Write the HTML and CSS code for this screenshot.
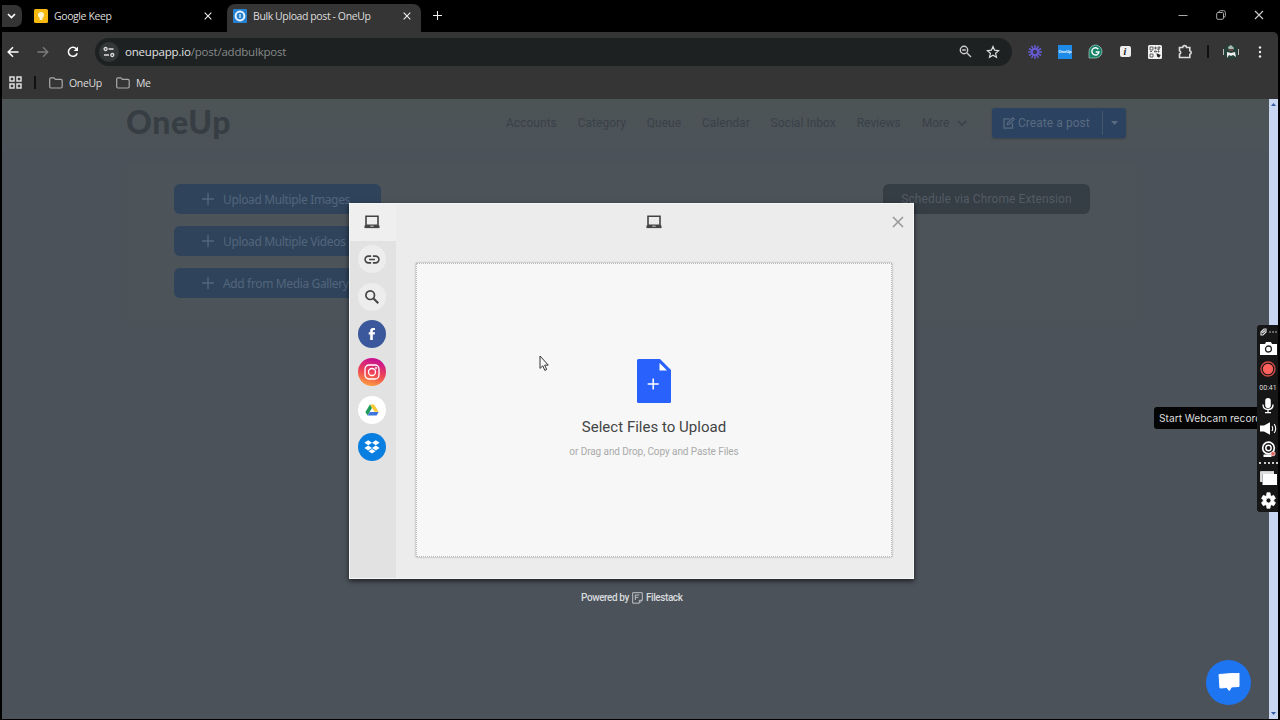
FILE: index.html
```html
<!DOCTYPE html>
<html lang="en">

<head>
    <meta charset="UTF-8">
    <meta name="viewport" content="width=device-width, initial-scale=1.0">
    <title>Bulk Upload post - OneUp</title>
    <link rel="stylesheet" href="styles.css">
</head>

<body>
    <svg class="sprite" width="0" height="0">
        <symbol id="laptop" viewBox="0 0 16 14">
            <path d="M2 1.2h12v9H2z" fill="none" stroke="currentColor" stroke-width="1.6" />
            <path d="M.5 10.5h15v2.6H.5z" fill="currentColor" />
            <path d="M6.3 11.2h3.4" stroke="#eee" stroke-width=".8" />
        </symbol>
        <symbol id="close" viewBox="0 0 12 12">
            <path d="M1 1l10 10M11 1L1 11" fill="none" stroke="currentColor" stroke-width="1.6" />
        </symbol>
        <symbol id="folder" viewBox="0 0 14 12">
            <path d="M.7 9.8V2q0-1.2 1.2-1.2h3l1.5 1.5h5.5q1.3 0 1.3 1.2v6.3q0 1.2-1.3 1.2h-10Q.7 11 .7 9.8z" fill="none" stroke="currentColor" stroke-width="1.2" />
        </symbol>
        <symbol id="plus" viewBox="0 0 12 12">
            <path d="M6 0v12M0 6h12" fill="none" stroke="currentColor" stroke-width="1.4" />
        </symbol>
    </svg>

    <div class="window">
        <div class="tabs">
            <button class="tabs__search"><svg width="9" height="6" viewBox="0 0 9 6"><path d="M1 1l3.5 3.5L8 1" fill="none" stroke="#fff" stroke-width="1.6" /></svg></button>
            <div class="tab">
                <svg width="14" height="14" viewBox="0 0 14 14"><rect width="14" height="14" rx="1.5" fill="#f7b90f" /><circle cx="7" cy="6" r="3" fill="#fff6d0" /><path d="M5.6 8h2.8v3H5.6z" fill="#fff6d0" /></svg>
                <span class="tab__title">Google Keep</span>
                <svg class="tab__close" width="8" height="8"><use href="#close" /></svg>
            </div>
            <div class="tab tab--active">
                <svg width="14" height="14" viewBox="0 0 14 14"><rect width="14" height="14" rx="1" fill="#2680cf" /><circle cx="7" cy="7" r="4.4" fill="#2680cf" stroke="#e9f5ff" stroke-width="2" /><path d="M7 5v4" stroke="#e9f5ff" stroke-width="1.2" /></svg>
                <span class="tab__title">Bulk Upload post - OneUp</span>
                <svg class="tab__close" width="8" height="8"><use href="#close" /></svg>
            </div>
            <svg class="tabs__new" width="9" height="9"><use href="#plus" /></svg>
            <div class="controls">
                <svg width="10" height="10" viewBox="0 0 10 10"><path d="M.5 5.5h9" stroke="#aaa" /></svg>
                <svg width="10" height="10" viewBox="0 0 10 10" fill="none" stroke="#aaa"><rect x=".7" y="2.5" width="6.8" height="6.8" rx="1.2" /><path d="M2.8 2.3Q3 .7 4.5.7h3q1.9 0 1.9 1.9v3q0 1.5-1.8 1.8" /></svg>
                <svg width="10" height="10" viewBox="0 0 10 10"><path d="M1 1l8 8M9 1L1 9" stroke="#ccc" stroke-width="1.1" /></svg>
            </div>
        </div>

        <div class="toolbar">
            <div class="toolbar__nav">
                <svg width="12" height="12" viewBox="0 0 12 12"><path d="M11.5 6H1.5M6 1.2L1.2 6 6 10.800" fill="none" stroke="#fff" stroke-width="1.5" /></svg>
                <svg width="12" height="12" viewBox="0 0 12 12"><path d="M.5 6h10M6 1.2L10.8 6 6 10.800" fill="none" stroke="#7c7c7c" stroke-width="1.3" /></svg>
                <svg width="12" height="12" viewBox="0 0 12 12"><path d="M10.2 7.2A4.5 4.5 0 1 1 9.7 3.4" fill="none" stroke="#fff" stroke-width="1.5" /><path d="M11 .6v4.3H6.7z" fill="#fff" /></svg>
            </div>
            <div class="address">
                <span class="address__info"><svg width="12" height="12" viewBox="0 0 12 12" fill="none" stroke="#ddd" stroke-width="1.3"><circle cx="2.6" cy="3" r="1.5" /><path d="M5.5 3h5M1 9h5" /><circle cx="9.3" cy="9" r="1.5" /></svg></span>
                <span class="address__url"><b>oneupapp.io</b>/post/addbulkpost</span>
                <svg class="address__zoom" width="13" height="13" viewBox="0 0 13 13" fill="none" stroke="#ccc" stroke-width="1.4"><circle cx="5" cy="5" r="3.7" /><path d="M8 8l4 4M3.2 5h3.6" /></svg>
                <svg width="14" height="14" viewBox="0 0 14 14"><path d="M7 1.5l1.6 3.7 4 .4-3 2.7.9 4L7 10.2l-3.5 2.1.9-4-3-2.7 4-.4z" fill="none" stroke="#ddd" stroke-width="1.2" /></svg>
            </div>
            <div class="extensions">
                <svg width="14" height="14" viewBox="0 0 14 14"><path d="M7 0v14M0 7h14M3.500.9l7 12.200M10.500.9l-7 12.200M.9 3.500l12.200 7M.9 10.500l12.200-7" stroke="#655bd0" stroke-width="1.5" /><circle cx="7" cy="7" r="4" fill="#655bd0" /><circle cx="7" cy="7" r="2.2" fill="#383653" /></svg>
                <span class="oneup-badge">OneUp</span>
                <svg width="15" height="15" viewBox="0 0 15 15"><path d="M1 14V7.5a6.5 6.5 0 1 1 6.5 6.5z" fill="#168268" stroke="#bfe3d5" stroke-width=".6" /><path d="M10.3 5.2A3.6 3.6 0 1 0 11 8H7.7" fill="none" stroke="#fff" stroke-width="1.4" /></svg>
                <span class="info-badge">i</span>
                <svg width="14" height="14" viewBox="0 0 14 14"><rect width="14" height="14" rx="1.5" fill="#f2f2f2" /><path d="M2 2h3v3H2zM2 9h3v3H2zM7 2h1v2H7zM10 2h2v1h-1v2h-1zM6.5 6h2v1h-2zM10 6h1v1h-1zM2 6.500h2" fill="none" stroke="#444" stroke-width=".8" /><path d="M8.500 8.200l4.200 1.700-1.600 2.900-2-1.300z" fill="#222" /></svg>
                <svg width="15" height="15" viewBox="0 0 15 15"><path d="M1.5 3.5h3.2a1.9 1.9 0 0 1 3.8 0h3.300v3.300a1.800 1.800 0 0 1 0 3.500v3.200H1.500v-3.400a1.800 1.800 0 0 0 0-3.400z" fill="none" stroke="#ddd" stroke-width="1.6" /></svg>
                <span class="toolbar__line"></span>
                <svg width="18" height="16" viewBox="0 0 18 16"><circle cx="9" cy="8" r="7.5" fill="#244039" /><path d="M1.5 5v6M16.5 5v6" stroke="#bbb" /><path d="M6 3l3-2 3 3-1 2H7z" fill="#a7b9b2" /><path d="M5 14V8l4 1 4-1 1 5-3-2-2 1-2-1z" fill="#eee" /><path d="M7 5h4v2H7z" fill="#65443e" /></svg>
                <svg width="4" height="14" viewBox="0 0 4 14" fill="#eee"><circle cx="2" cy="2.500" r="1.2" /><circle cx="2" cy="7" r="1.2" /><circle cx="2" cy="11.500" r="1.2" /></svg>
            </div>
        </div>

        <div class="bookmarks">
            <svg width="13" height="13" viewBox="0 0 13 13" fill="none" stroke="#ddd" stroke-width="1.5"><path d="M1 1h4v4H1zM8 1h4v4H8zM1 8h4v4H1zM8 8h4v4H8z" /></svg>
            <span class="bookmarks__line"></span>
            <svg class="bookmarks__folder" width="14" height="12"><use href="#folder" /></svg>
            <span class="bookmarks__name">OneUp</span>
            <svg class="bookmarks__folder" width="14" height="12"><use href="#folder" /></svg>
            <span>Me</span>
        </div>

        <div class="viewport">
            <div class="page">
                <header class="header">
                    <div class="logo">OneUp</div>
                    <nav class="nav">
                        <a>Accounts</a>
                        <a>Category</a>
                        <a>Queue</a>
                        <a>Calendar</a>
                        <a>Social Inbox</a>
                        <a>Reviews</a>
                        <a>More <svg width="10" height="7" viewBox="0 0 10 7"><path d="M1 1l4 4 4-4" fill="none" stroke="currentColor" stroke-width="1.6" /></svg></a>
                    </nav>
                    <div class="create">
                        <div class="create__main"><svg width="12" height="12" viewBox="0 0 12 12" fill="none" stroke="currentColor" stroke-width="1.2"><path d="M6.5 1.800H1v9.300h8.500V6" /><path d="M4.300 7.800l.4-2L9.800.8l1.400 1.500-5 5z" /></svg>Create a post</div>
                        <div class="create__more"><svg width="7" height="4" viewBox="0 0 7 4"><path d="M0 0h7L3.500 4z" fill="currentColor" /></svg></div>
                    </div>
                </header>
                <main class="card">
                    <div class="card__actions">
                        <button class="action"><svg width="12" height="12"><use href="#plus" /></svg>Upload Multiple Images</button>
                        <button class="action"><svg width="12" height="12"><use href="#plus" /></svg>Upload Multiple Videos</button>
                        <button class="action"><svg width="12" height="12"><use href="#plus" /></svg>Add from Media Gallery</button>
                    </div>
                    <button class="extension-button">Schedule via Chrome Extension</button>
                </main>
            </div>
            <div class="scrollbar">
                <svg width="5" height="3" viewBox="0 0 5 3"><path d="M0 3L2.5 0 5 3z" fill="#345aa4" /></svg>
                <svg width="5" height="3" viewBox="0 0 5 3"><path d="M0 0h5L2.5 3z" fill="#345aa4" /></svg>
            </div>
        </div>
    </div>

    <section class="picker">
        <aside class="picker__sources">
            <div class="source source--current"><svg width="16" height="14"><use href="#laptop" /></svg></div>
            <div class="source"><span class="source__icon"><svg width="16" height="9" viewBox="0 0 18 10" fill="none" stroke="#444" stroke-width="1.8"><path d="M8 1.2H5a3.8 3.8 0 0 0 0 7.6h3M10 1.2h3a3.8 3.8 0 0 1 0 7.6h-3M5.7 5h6.6" /></svg></span></div>
            <div class="source"><span class="source__icon"><svg width="16" height="16" viewBox="0 0 16 16" fill="none" stroke="#444"><circle cx="6.200" cy="6.200" r="4.300" stroke-width="1.7" /><path d="M9.500 9.500l4.800 4.800" stroke-width="2" /></svg></span></div>
            <div class="source"><span class="source__icon source__icon--facebook"><svg width="8" height="14" viewBox="0 0 8 14"><path d="M2.200 13V7.600H.7V5.300h1.500V3.700Q2.200.9 5 .9h2V3H5.700q-.9 0-.9.9v1.400H7l-.3 2.300H4.800V13z" fill="#fff" /></svg></span></div>
            <div class="source"><span class="source__icon source__icon--instagram"><svg width="16" height="16" viewBox="0 0 16 16" fill="none" stroke="#fff" stroke-width="1.3"><rect x="1" y="1" width="14" height="14" rx="4" /><circle cx="8" cy="8" r="3.5" /><circle cx="12" cy="4" r=".4" /></svg></span></div>
            <div class="source"><span class="source__icon source__icon--drive"><svg width="14" height="12" viewBox="0 0 15 13"><path d="M5.200.5h4.500l5 8h-4.400z" fill="#fbc934" /><path d="M5.200.5L.4 8.700l2.200 3.800 4.900-8.200z" fill="#209b58" /><path d="M5 8.600h9.700l-2.200 3.900H2.700z" fill="#3d75dc" /></svg></span></div>
            <div class="source"><span class="source__icon source__icon--dropbox"><svg width="16" height="14" viewBox="0 0 16 14" fill="#fff"><path d="M4.200.2L8 2.700 4.200 5.200.4 2.700zM11.800.2l3.800 2.500-3.800 2.500L8 2.700zM4.200 5.500L8 8l-3.800 2.500L.4 8zM11.800 5.500L15.600 8l-3.800 2.500L8 8zM8 8.900l3.500 2.300L8 13.600l-3.500-2.400z" /></svg></span></div>
        </aside>
        <div class="picker__content">
            <div class="picker__header">
                <svg width="16" height="14"><use href="#laptop" /></svg>
                <svg class="picker__close" width="12" height="12"><use href="#close" /></svg>
            </div>
            <div class="dropzone">
                <svg width="34" height="44" viewBox="0 0 34 44"><path d="M1.500 0H23l11 11v31.500q0 1.500-1.500 1.500h-31Q0 44 0 42.500v-41Q0 0 1.500 0z" fill="#2861fb" /><path d="M22.500 4v7.500H30z" fill="#fff" /><path d="M16.200 19.500v11M10.700 25h11" stroke="#fff" stroke-width="1.5" /></svg>
                <div class="dropzone__title">Select Files to Upload</div>
                <div class="dropzone__hint">or Drag and Drop, Copy and Paste Files</div>
            </div>
        </div>
    </section>

    <div class="powered">Powered by <svg width="11" height="12" viewBox="0 0 11 12" fill="none" stroke="#bbc0c4"><path d="M.7.7h9.600v7.500l-3 3H.7zM7.300 11V8.300h3" /><path d="M3.300 8V3h4M3.300 5.400h3" /></svg> Filestack</div>

    <svg class="cursor" width="10" height="17" viewBox="0 0 10 17"><path d="M1 1v12.400l2.800-2.600 2 4.600 1.900-.9-2-4.400h3.600z" fill="#f8f8f8" stroke="#333" /></svg>

    <div class="tooltip">Start Webcam record</div>

    <div class="recorder">
        <svg width="18" height="8" viewBox="0 0 18 8"><path d="M2 4l3-3h2v3L4 7H2zM3.200 5L6 2.500" fill="none" stroke="#ddd" stroke-width="1.2" /><g fill="#ccc"><circle cx="11" cy="4" r=".8" /><circle cx="14" cy="4" r=".8" /><circle cx="17" cy="4" r=".8" /></g></svg>
        <svg width="17" height="13" viewBox="0 0 17 13"><path d="M0 2h5l1-2h5l1 2h5v11H0z" fill="#fff" /><circle cx="8.500" cy="7" r="3" fill="#fff" stroke="#222" stroke-width="1.3" /></svg>
        <svg width="16" height="16" viewBox="0 0 16 16"><circle cx="8" cy="8" r="7" fill="none" stroke="#d44c49" stroke-width="1.3" /><circle cx="8" cy="8" r="5.200" fill="#ff625d" /></svg>
        <span class="recorder__time">00:41</span>
        <svg width="12" height="17" viewBox="0 0 12 17"><rect x="3.200" y="1" width="5.600" height="10" rx="2.800" fill="#fff" /><path d="M1 7.500q0 5 5 5t5-5M6 12.500v3M3 15.700h6" fill="none" stroke="#fff" stroke-width="1.3" /></svg>
        <svg width="17" height="13" viewBox="0 0 17 13"><path d="M0 3.500h4L10 .3v12.400L4 9.500H0z" fill="#fff" /><path d="M12 4q1.400 2.500 0 5M14.200 2q3 4.500 0 9" fill="none" stroke="#fff" stroke-width="1.1" /></svg>
        <svg width="15" height="17" viewBox="0 0 15 17"><circle cx="7.500" cy="7" r="5.800" fill="none" stroke="#fff" stroke-width="1.7" /><circle cx="7.500" cy="7" r="2.700" fill="none" stroke="#fff" stroke-width="1.5" /><path d="M2.500 13.500h8V16h-8z" fill="#fff" /><circle cx="12" cy="12.700" r="2.200" fill="#e5645e" stroke="#fff" stroke-width=".6" /></svg>
        <span class="recorder__line"></span>
        <svg width="17" height="14" viewBox="0 0 17 14"><path d="M.5 11V.5H14" fill="none" stroke="#ccc" /><path d="M2.500 3H17v11H2.500z" fill="#fff" /><path d="M.5 1H14v2H2.500v8h-2z" fill="#ddd" /></svg>
        <svg width="17" height="17" viewBox="0 0 24 24"><path d="M19.400 13a7.500 7.500 0 0 0 0-2l2.500-2-2.500-4.300-3 1.200a8 8 0 0 0-1.700-1L14.200 1H9.800l-.5 3.900a8 8 0 0 0-1.700 1l-3-1.200L2.100 9l2.500 2a7.500 7.500 0 0 0 0 2l-2.500 2 2.500 4.300 3-1.200a8 8 0 0 0 1.700 1l.5 3.900h4.400l.5-3.900a8 8 0 0 0 1.700-1l3 1.200 2.500-4.300zM12 15.500a3.500 3.500 0 1 1 0-7 3.500 3.500 0 0 1 0 7z" fill="#fff" stroke="#fff" /></svg>
    </div>

    <div class="chat"><svg width="22" height="19" viewBox="0 0 22 19"><path d="M1 1.500L21 0v13.500l-7.500.4-2.200 3.700L8.600 14.500 2 15z" fill="#fff" stroke="#fff" stroke-linejoin="round" /></svg></div>
</body>

</html>
```
FILE: styles.css
```css
:root {
    --color-chrome: #353535;
    --color-page: #4b5259;
    --color-button: #2f435b;
    --color-picker: #ececec;
}

* {
    box-sizing: border-box;
}

body {
    margin: 0;
    height: 720px;
    overflow: hidden;
    background: #000;
    font-family: "Roboto", sans-serif;
}

svg {
    display: block;
    flex: none;
}

button {
    border: 0;
    padding: 0;
    font: inherit;
}

.sprite {
    position: absolute;
}

.window {
    display: flex;
    flex-direction: column;
    width: 1276px;
    height: 719px;
    margin-left: 2px;
    font-family: "Open Sans", sans-serif;
    font-size: 10.5px;
    color: #ddd;
    white-space: nowrap;
}

/* Browser */
.tabs {
    display: flex;
    align-items: center;
    height: 32px;
}

.tabs__search {
    display: flex;
    align-items: center;
    justify-content: center;
    width: 20px;
    height: 22px;
    padding-right: 2px;
    margin-top: -1px;
    border-radius: 0 7px 7px 0;
    background: #343434;
}

.tab {
    display: flex;
    align-items: center;
    gap: 6px;
    width: 205px;
    height: 28px;
    margin-top: 4px;
    padding: 0 15px 5px 12px;
}

.tab__title {
    letter-spacing: -0.4px;
}

.tab__close {
    margin-left: auto;
    color: #eee;
}

.tab--active {
    width: 194px;
    padding: 0 10px 5px 6px;
    border-radius: 8px 8px 0 0;
    background: var(--color-chrome);
}

.tabs__new {
    margin-left: 12px;
    margin-top: -1px;
    color: #eee;
}

.controls {
    display: flex;
    gap: 28px;
    margin-left: auto;
    margin-right: 14px;
    margin-top: -2px;
}

.toolbar {
    display: flex;
    align-items: center;
    height: 34px;
    padding: 5px 16px 0 5px;
    background: var(--color-chrome);
    border-radius: 0 5px 0 0;
}

.toolbar__nav {
    display: flex;
    gap: 18px;
    width: 88px;
}

.address {
    display: flex;
    align-items: center;
    width: 917px;
    height: 28px;
    padding: 0 12px 0 4px;
    border-radius: 14px;
    background: #1d2122;
}

.address__info {
    display: flex;
    align-items: center;
    justify-content: center;
    width: 20px;
    height: 20px;
    border-radius: 50%;
    background: #343738;
}

.address__url {
    margin-left: 6px;
    color: #868989;
    font-size: 11.5px;
    letter-spacing: -0.2px;
}

.address__url b {
    font-weight: 400;
    color: #e2e3e3;
}

.address__zoom {
    margin-left: auto;
    margin-right: 14px;
}

/* Extension icons every 30px, then the divider, avatar and menu */
.extensions {
    display: grid;
    grid-template-columns: repeat(6, 30px) 16px 30px 28px;
    align-items: center;
    justify-items: center;
    margin-left: 8px;
    margin-right: -20px;
}

.oneup-badge {
    width: 14px;
    height: 14px;
    background: #1e8be8;
    color: #fff;
    font: bold 4px/14px "Liberation Sans", sans-serif;
    text-align: center;
}

.info-badge {
    width: 11px;
    height: 11px;
    border-radius: 2px;
    background: #eee;
    color: #222;
    font: italic bold 10px/11px "Liberation Serif", serif;
    text-align: center;
}

.toolbar__line,
.bookmarks__line {
    width: 2px;
    height: 13px;
    background: #111;
}

.bookmarks {
    display: flex;
    align-items: center;
    height: 33px;
    padding-left: 7px;
    background: var(--color-chrome);
    letter-spacing: -0.35px;
}

.bookmarks__line {
    margin: 0 13px 0 12px;
}

.bookmarks__folder {
    margin-right: 6px;
    color: #aaa;
}

.bookmarks__name {
    width: 47px;
}

/* OneUp page, dimmed behind the picker */
.viewport {
    display: flex;
    flex: 1;
}

.page {
    flex: 1;
    background: var(--color-page);
}

.header {
    display: flex;
    align-items: center;
    height: 48px;
    padding-left: 124px;
    background: linear-gradient(#4d5455, #4c5359);
    color: #394148;
    font-family: "Roboto", sans-serif;
    font-size: 12px;
}

.logo {
    width: 380px;
    padding-bottom: 3px;
    color: #373e43;
    font: 900 32px/36px "Lato", sans-serif;
    letter-spacing: 0.6px;
}

.nav {
    display: flex;
    gap: 20.8px;
    width: 486px;
    letter-spacing: 0.03px;
}

.nav a {
    display: flex;
    align-items: center;
    gap: 8px;
}

.create {
    display: flex;
    width: 134px;
    height: 30px;
    border-radius: 3px;
    background: #2b4261;
    color: #596b7f;
    box-shadow: 0 1px 2px #3a424b;
}

.create__main {
    display: flex;
    align-items: center;
    gap: 3px;
    width: 110px;
    padding-left: 11px;
    letter-spacing: 0.05px;
}

.create__more {
    display: flex;
    flex: 1;
    align-items: center;
    justify-content: center;
    margin: 3px 0;
    border-left: 1px solid #43566d;
}

.card {
    display: flex;
    justify-content: space-between;
    align-items: flex-start;
    width: 1012px;
    height: 160px;
    margin: 16px 0 0 124px;
    padding: 20px 50px 0 48px;
    border: 1px solid #4a5157;
    background: #4c5359;
}

.card__actions {
    display: grid;
    gap: 12px;
    width: 207px;
    margin-left: -1px;
}

.action {
    display: flex;
    align-items: center;
    gap: 9px;
    height: 30px;
    padding-left: 28px;
    border-radius: 6px;
    background: var(--color-button);
    color: #52667c;
    font: 12px "Noto Sans", sans-serif;
    letter-spacing: -0.36px;
}

.extension-button {
    width: 207px;
    height: 30px;
    margin-right: -3px;
    padding-bottom: 1px;
    border-radius: 6px;
    background: #353d45;
    color: #535b63;
    font: 12px "Roboto", sans-serif;
    letter-spacing: 0.1px;
}

.scrollbar {
    display: flex;
    flex-direction: column;
    align-items: center;
    justify-content: space-between;
    width: 9px;
    padding: 4px 0;
    background: #c9d6f1;
}

/* File picker */
.picker {
    position: absolute;
    top: 203px;
    left: 349px;
    display: flex;
    width: 565px;
    height: 376px;
    border: 1px solid #f3f7f8;
    background: var(--color-picker);
    box-shadow: 0 2px 5px rgba(0, 0, 0, 0.65);
}

.picker__sources {
    width: 46px;
    background: #e2e2e2;
}

.source {
    display: flex;
    align-items: center;
    justify-content: center;
    height: 37.6px;
    padding-right: 2px;
    color: #444;
}

.source--current {
    height: 36.5px;
    padding-bottom: 1px;
    background: #efeff0;
}

.source__icon {
    display: flex;
    align-items: center;
    justify-content: center;
    width: 28px;
    height: 28px;
    border-radius: 50%;
    background: #ededed;
}

.source__icon--facebook {
    background: #3a589b;
}

.source__icon--instagram {
    background: linear-gradient(15deg, #ffb13b, #ef4753 45%, #c9148e 85%);
}

.source__icon--drive {
    background: #fff;
}

.source__icon--dropbox {
    background: #087ee1;
}

.picker__content {
    flex: 1;
    padding: 0 21px 21px 20px;
}

.picker__header {
    display: grid;
    grid-template-columns: 1fr 16px 1fr;
    align-items: center;
    height: 36px;
    color: #444;
}

.picker__header svg:first-child {
    grid-column: 2;
}

.picker__close {
    justify-self: end;
    margin-right: -12px;
    color: #999;
}

.dropzone {
    display: flex;
    flex-direction: column;
    align-items: center;
    height: 294px;
    margin-top: 23px;
    padding-top: 95px;
    border: 1px dotted #bbb;
    background: #f7f7f7;
    box-shadow: 0 0 2px #999;
    white-space: nowrap;
}

.dropzone__title {
    margin-top: 14px;
    color: #444;
    font-size: 15px;
    line-height: 20px;
    letter-spacing: 0.02px;
}

.dropzone__hint {
    margin-top: 8px;
    color: #aaa;
    font-size: 10px;
    line-height: 14px;
    letter-spacing: -0.08px;
}

.powered {
    position: absolute;
    top: 590px;
    left: 581px;
    display: flex;
    align-items: center;
    gap: 3px;
    height: 15px;
    color: #d7dadd;
    font-size: 10px;
    font-weight: 500;
    letter-spacing: -0.42px;
}

.cursor {
    position: absolute;
    top: 355px;
    left: 539px;
}

/* Screen recorder */
.tooltip {
    position: absolute;
    top: 407px;
    left: 1154px;
    height: 22px;
    padding-left: 5px;
    border-radius: 3px;
    background: #050505;
    color: #ddd;
    font: 10.2px/22px "Inter", sans-serif;
    white-space: nowrap;
}

.recorder {
    position: absolute;
    top: 325px;
    left: 1257px;
    display: flex;
    flex-direction: column;
    align-items: center;
    width: 21px;
    height: 187px;
    padding: 3px 0 4px 1px;
    border-radius: 3px 0 0 3px;
    background: #161616;
}

.recorder svg:nth-of-type(2) {
    margin: 6px 0;
}

.recorder__time {
    margin: 7px 0 5px;
    color: #ddd;
    font: 7px/8px "Roboto", sans-serif;
}

.recorder svg:nth-of-type(5) {
    margin: 8px 0 6px;
}

.recorder__line {
    width: 19px;
    margin: 4px 0 7px;
    border-top: 2px dotted #ccc;
}

.recorder svg:last-child {
    margin-top: 7px;
}

.chat {
    position: absolute;
    top: 660px;
    left: 1206px;
    display: flex;
    align-items: center;
    justify-content: center;
    width: 45px;
    height: 45px;
    border-radius: 50%;
    background: #1e75f2;
}
```
